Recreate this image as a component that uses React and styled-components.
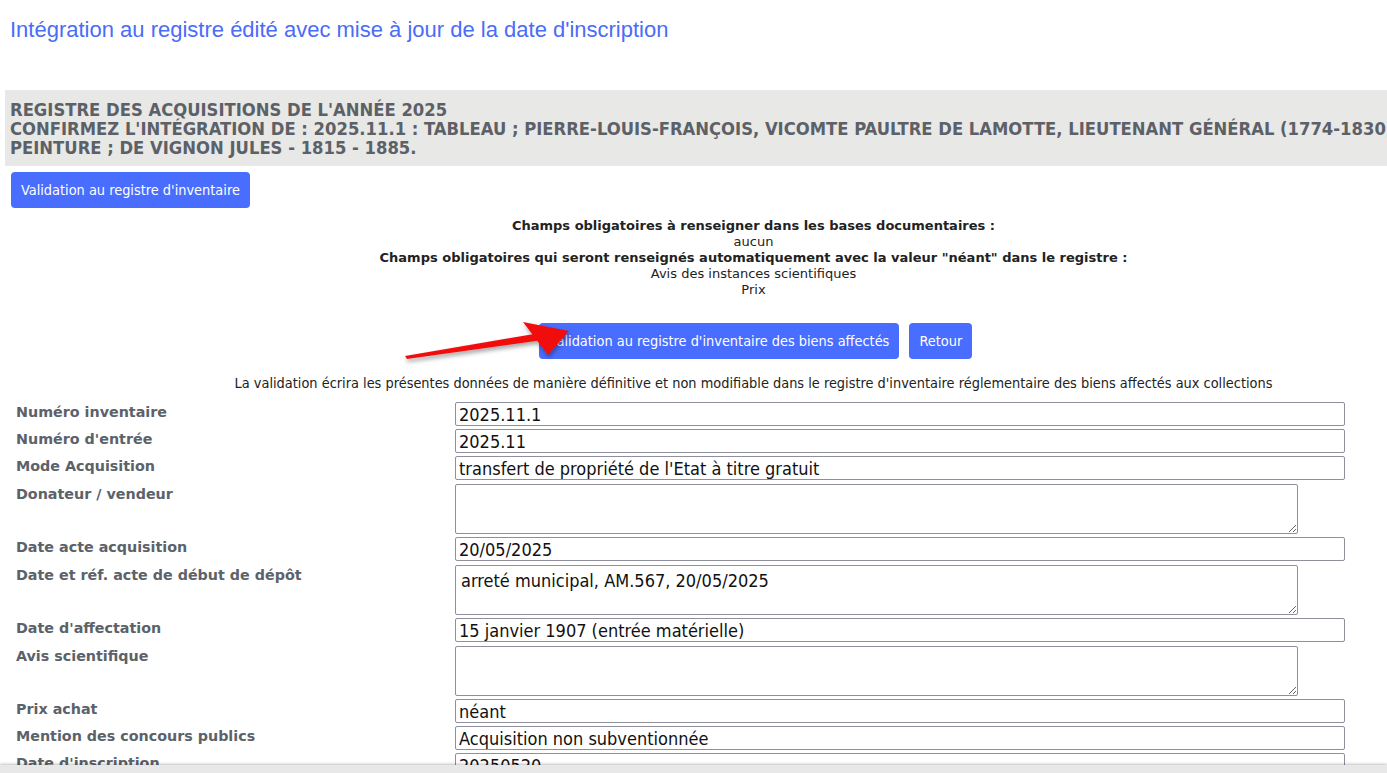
import styled, { createGlobalStyle } from "styled-components";

const GlobalStyle = createGlobalStyle`
  html, body {
    margin: 0;
    padding: 0;
    background: #fff;
    overflow: hidden;
  }
`

const fields = [
    {label: "Numéro inventaire", value: "2025.11.1"},
    {label: "Numéro d'entrée", value: "2025.11"},
    {label: "Mode Acquisition", value: "transfert de propriété de l'Etat à titre gratuit"},
    {label: "Donateur / vendeur", value: "", area: true},
    {label: "Date acte acquisition", value: "20/05/2025"},
    {label: "Date et réf. acte de début de dépôt", value: "arreté municipal, AM.567, 20/05/2025", area: true},
    {label: "Date d'affectation", value: "15 janvier 1907 (entrée matérielle)"},
    {label: "Avis scientifique", value: "", area: true},
    {label: "Prix achat", value: "néant"},
    {label: "Mention des concours publics", value: "Acquisition non subventionnée"},
    {label: "Date d'inscription", value: "20250520"},
]

const App = () => {

    return (
    <Page>
        <GlobalStyle />
        <Title>Intégration au registre édité avec mise à jour de la date d'inscription</Title>
        <Band>
            <BandLine>REGISTRE DES ACQUISITIONS DE L'ANNÉE 2025</BandLine>
            <BandLine>CONFIRMEZ L'INTÉGRATION DE : 2025.11.1 : TABLEAU ; PIERRE-LOUIS-FRANÇOIS, VICOMTE PAULTRE DE LAMOTTE, LIEUTENANT GÉNÉRAL (1774-1830) ;</BandLine>
            <BandLine>PEINTURE ; DE VIGNON JULES - 1815 - 1885.</BandLine>
        </Band>
        <TopActions>
            <Button>Validation au registre d'inventaire</Button>
        </TopActions>
        <Notes>
            <Line bold>Champs obligatoires à renseigner dans les bases documentaires :</Line>
            <Line>aucun</Line>
            <Line bold>Champs obligatoires qui seront renseignés automatiquement avec la valeur "néant" dans le registre :</Line>
            <Line>Avis des instances scientifiques</Line>
            <Line>Prix</Line>
        </Notes>
        <Actions>
            <Button>Validation au registre d'inventaire des biens affectés</Button>
            <Button>Retour</Button>
            <Arrow viewBox="0 0 200 50" width="200" height="50">
                <defs>
                    <filter id="arrowShadow" x="-20%" y="-50%" width="140%" height="200%">
                        <feDropShadow dx="1" dy="3" stdDeviation="2" floodColor="#000" floodOpacity="0.35"/>
                    </filter>
                </defs>
                <g filter="url(#arrowShadow)" fill="#f20d0d">
                    <polygon points="15,42 150,19 153,26 17,45"/>
                    <polygon points="179,17 133,8 158,41"/>
                </g>
            </Arrow>
        </Actions>
        <Warning>La validation écrira les présentes données de manière définitive et non modifiable dans le registre d'inventaire réglementaire des biens affectés aux collections</Warning>
        <Form>
            {fields.map((f) => (
                <Row key={f.label} area={f.area}>
                    <Label>{f.label}</Label>
                    {f.area
                        ? <Area readOnly defaultValue={f.value}/>
                        : <Field readOnly defaultValue={f.value}/>}
                </Row>
            ))}
        </Form>
        <BottomBar/>
    </Page>
    )

}

const Page = styled.div`
  width: 1500px;
  padding-top: 17px;
  padding-bottom: 40px;
`

const Title = styled.h1`
  margin: 0 0 0 10px;
  font-family: "Liberation Sans", Arial, sans-serif;
  font-weight: normal;
  font-size: 22px;
  line-height: 25px;
  color: #4a6cf7;
`

const Band = styled.div`
  margin: 48px 0 0 5px;
  padding: 10px 5px 9px;
  background: #e8e8e6;
  width: 1500px;
`

const BandLine = styled.div`
  font-family: "DejaVu Sans Condensed", "DejaVu Sans", sans-serif;
  font-stretch: condensed;
  font-weight: bold;
  font-size: 18.25px;
  line-height: 19px;
  color: #5c6168;
  white-space: nowrap;
`

const TopActions = styled.div`
  display: flex;
  padding: 6px 0 0 11px;
`

const Button = styled.button`
  height: 36px;
  padding: 0 10px;
  border: 0;
  border-radius: 4px;
  background: #486dff;
  color: #fff;
  font-family: "DejaVu Sans Condensed", "DejaVu Sans", sans-serif;
  font-stretch: condensed;
  font-size: 14.4px;
  cursor: pointer;
`

const Notes = styled.div`
  width: 1495px;
  margin: 10px 0 0 6px;
  text-align: center;
`

const Line = styled.div`
  font-family: "DejaVu Sans", Verdana, sans-serif;
  font-size: 13px;
  line-height: 16px;
  font-weight: ${p => p.bold ? "bold" : "normal"};
  color: #222;
`

const Actions = styled.div`
  position: relative;
  width: 1495px;
  margin: 25px 0 0 8px;
  display: flex;
  justify-content: center;
  gap: 10px;
`

const Arrow = styled.svg`
  position: absolute;
  left: 382px;
  top: -9px;
  overflow: visible;
  pointer-events: none;
`

const Warning = styled.div`
  width: 1495px;
  margin: 16px 0 0 6px;
  text-align: center;
  font-family: "DejaVu Sans Condensed", "DejaVu Sans", sans-serif;
  font-stretch: condensed;
  font-size: 14.4px;
  line-height: 16px;
  color: #222;
`

const Form = styled.div`
  display: flex;
  flex-direction: column;
  gap: 3px;
  margin: 11px 0 0 16px;
`

const Row = styled.div`
  display: grid;
  grid-template-columns: 439px auto;
  align-items: start;
  padding-top: ${p => p.area ? "1px" : "0"};
`

const Label = styled.div`
  font-family: "DejaVu Sans", Verdana, sans-serif;
  font-weight: bold;
  font-size: 14.3px;
  line-height: 18px;
  padding-top: 1px;
  color: #5c6269;
`

const Field = styled.input`
  box-sizing: border-box;
  width: 890px;
  height: 24px;
  margin: 0;
  padding: 1px 3px;
  border: 1px solid #8f8f9d;
  border-radius: 2px;
  font-family: "DejaVu Sans Condensed", "DejaVu Sans", sans-serif;
  font-stretch: condensed;
  font-size: 18px;
  color: #111;
  background: #fff;
  outline: none;
`

const Area = styled.textarea`
  box-sizing: border-box;
  display: block;
  width: 843px;
  height: 50px;
  margin: 0;
  padding: 5px 5px;
  border: 1px solid #8f8f9d;
  border-radius: 2px;
  font-family: "DejaVu Sans Condensed", "DejaVu Sans", sans-serif;
  font-stretch: condensed;
  font-size: 18px;
  line-height: 20px;
  color: #111;
  background: #fff;
  outline: none;
`

const BottomBar = styled.div`
  position: fixed;
  left: 0;
  right: 0;
  bottom: 0;
  height: 8px;
  background: #e8e8e8;
  box-shadow: 0 -1px 3px rgba(0, 0, 0, 0.25);
`

export default App
